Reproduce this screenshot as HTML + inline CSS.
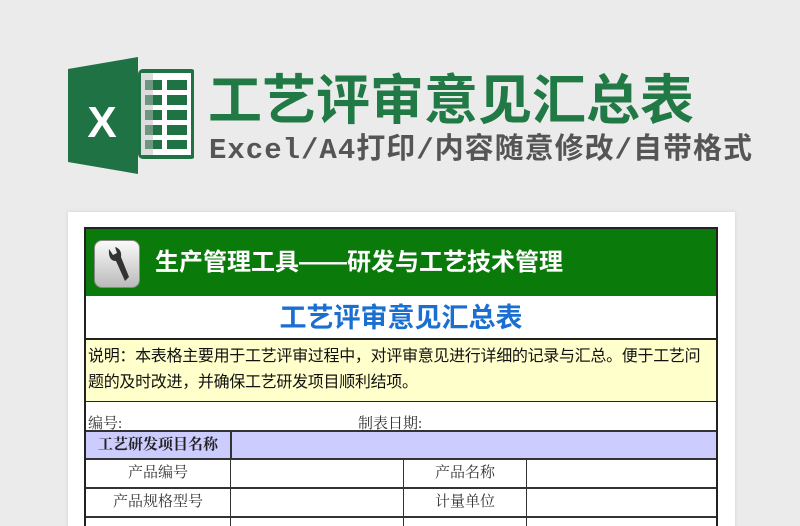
<!DOCTYPE html>
<html><head><meta charset="utf-8"><style>
*{margin:0;padding:0;box-sizing:border-box}
html,body{width:800px;height:526px;overflow:hidden}
body{background:#ebebeb;position:relative;font-family:"Liberation Sans","Noto Sans CJK SC",sans-serif}
.t1{position:absolute;left:208px;top:68px;font-size:54px;font-weight:bold;color:#217a45;letter-spacing:0px;white-space:nowrap;line-height:66px}
.t2{position:absolute;left:209px;top:132px;font-size:29px;color:#555;white-space:nowrap;letter-spacing:1px;line-height:38px;font-family:"Liberation Mono","Noto Sans CJK SC",monospace;font-weight:bold}
.paper{position:absolute;left:68px;top:212px;width:667px;height:330px;background:#fff;box-shadow:0 0 3px #ccc}
.tb{position:absolute;left:84px;top:227px;width:634px;height:310px;border:2px solid #222;border-bottom:none}
.g{position:absolute;left:0;top:0;width:630px;height:67px;background:#0a7a0a;color:#fff;font-size:24px;font-weight:bold;line-height:67px;padding-left:69px;white-space:nowrap}
.ic{position:absolute;left:8px;top:11px;width:46px;height:48px;border-radius:8px;background:linear-gradient(#fafafa,#bbb);border:1px solid #888}
.ti{position:absolute;left:0;top:67px;width:630px;height:44px;border-bottom:2px solid #222;text-align:center;color:#1a6fd1;font-size:27px;font-weight:bold;line-height:44px}
.n{position:absolute;left:0;top:111px;width:630px;height:62px;background:#ffffcc;border-bottom:1px solid #222;font-size:16px;line-height:26px;padding:4px 2px;color:#111;letter-spacing:-0.3px}
.r{position:absolute;left:0;width:630px;border-bottom:2px solid #333;font-family:"Liberation Serif","Noto Serif CJK SC",serif;font-size:15px;color:#333}
.c{position:absolute;top:0;height:100%;border-left:1px solid #333;text-align:center}
</style></head><body>
<svg style="position:absolute;left:66px;top:57px" width="128" height="117" viewBox="0 0 128 117">
<rect x="72" y="12" width="58" height="90" rx="5" fill="#1f7244"/>
<rect x="75" y="16" width="50" height="82" fill="#fff"/>
<g fill="#1f7244"><rect x="79" y="23" width="17" height="10"/><rect x="101" y="23" width="20" height="10"/><rect x="79" y="38" width="17" height="10"/><rect x="101" y="38" width="20" height="10"/><rect x="79" y="53" width="17" height="10"/><rect x="101" y="53" width="20" height="10"/><rect x="79" y="68" width="17" height="10"/><rect x="101" y="68" width="20" height="10"/><rect x="79" y="83" width="17" height="9"/><rect x="101" y="83" width="20" height="9"/></g>
<rect x="75" y="16" width="12" height="82" fill="#bbb" opacity=".5"/>
<polygon points="2,12 72,0 72,117 2,105" fill="#1f7244"/>
<text x="36" y="80" font-family="Liberation Sans" font-weight="bold" font-size="44" fill="#fff" text-anchor="middle">X</text>
</svg>
<div class="t1">工艺评审意见汇总表</div>
<div class="t2">Excel/A4打印/内容随意修改/自带格式</div>
<div class="paper"></div>
<div class="tb">
<div class="g"><div class="ic"><svg width="46" height="48" viewBox="0 0 46 48"><path d="M14 8 L18 14 L22 12 L20 6 Q27 8 26 16 L34 36 L30 40 L21 20 Q13 20 14 8Z" fill="#333"/></svg></div>生产管理工具——研发与工艺技术管理</div>
<div class="ti">工艺评审意见汇总表</div>
<div class="n">说明：本表格主要用于工艺评审过程中，对评审意见进行详细的记录与汇总。便于工艺问题的及时改进，并确保工艺研发项目顺利结项。</div>
<div class="r" style="top:173px;height:30px"><span style="position:absolute;left:2px;top:10px">编号:</span><span style="position:absolute;left:272px;top:10px">制表日期:</span></div>
<div class="r" style="top:203px;height:28px;background:#ccccff;font-weight:bold;color:#222"><span style="position:absolute;left:0;width:144px;text-align:center;line-height:26px">工艺研发项目名称</span><div class="c" style="left:144px;border-left:2px solid #333"></div></div>
<div class="r" style="top:231px;height:29px;line-height:27px"><span style="position:absolute;left:0;width:144px;text-align:center">产品编号</span><div class="c" style="left:144px"></div><div class="c" style="left:317px;width:123px">产品名称</div><div class="c" style="left:440px"></div></div>
<div class="r" style="top:260px;height:29px;line-height:27px"><span style="position:absolute;left:0;width:144px;text-align:center">产品规格型号</span><div class="c" style="left:144px"></div><div class="c" style="left:317px;width:123px">计量单位</div><div class="c" style="left:440px"></div></div>
<div class="r" style="top:289px;height:29px;border:none"><div class="c" style="left:144px"></div><div class="c" style="left:317px"></div><div class="c" style="left:440px"></div></div>
</div>
</body></html>
